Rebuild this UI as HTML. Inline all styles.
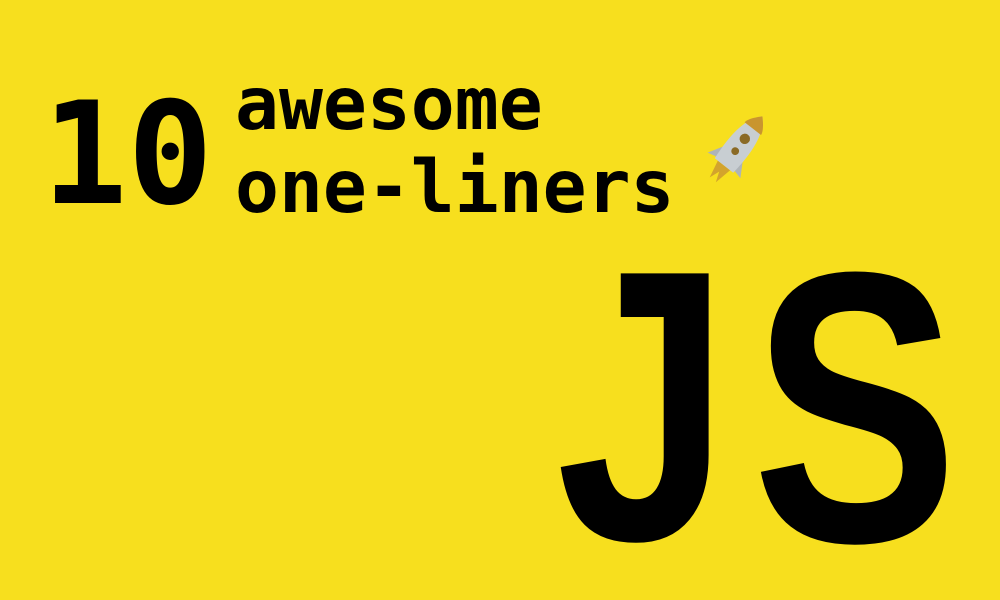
<!DOCTYPE html>
<html><head><meta charset="utf-8"><style>
html,body{margin:0;padding:0}
body{width:1000px;height:600px;background:#F7DF1E;position:relative;overflow:hidden}
svg{position:absolute;left:0;top:0}
</style></head><body>
<svg width="1000" height="600" viewBox="0 0 1000 600">
<rect width="1000" height="600" fill="#F7DF1E"/>
<text x="42" y="203" font-family="DejaVu Sans Mono, monospace" font-weight="bold" font-size="142" fill="#000">10</text>
<text x="235" y="129" font-family="DejaVu Sans Mono, monospace" font-weight="bold" font-size="73" fill="#000">awesome</text>
<text x="235" y="212" font-family="DejaVu Sans Mono, monospace" font-weight="bold" font-size="73" fill="#000">one-liners</text>
<text x="556" y="539" font-family="Liberation Sans, sans-serif" font-weight="bold" font-size="386" fill="#000" textLength="174" lengthAdjust="spacingAndGlyphs">J</text>
<text x="752" y="541" font-family="Liberation Sans, sans-serif" font-weight="bold" font-size="386" fill="#000" textLength="206" lengthAdjust="spacingAndGlyphs">S</text>
<g transform="translate(740,145) rotate(38) scale(1.3)">
<path d="M-6 20 L-3 34 L0 26 L3 34 L6 20 Z" fill="#c9952f" opacity="0.8"/>
<path d="M-9 8 L-16 20 L-8 18 Z" fill="#aeb4b8"/>
<path d="M9 8 L16 20 L8 18 Z" fill="#aeb4b8"/>
<path d="M0 -28 C10 -18 11 0 9 20 L-9 20 C-11 0 -10 -18 0 -28 Z" fill="#c8ced2"/>
<path d="M0 -28 C6 -22 8 -18 8 -16 L-8 -16 C-8 -18 -6 -22 0 -28 Z" fill="#c9952f"/>
<circle cx="0" cy="-6" r="4" fill="#8a6a25"/>
<circle cx="0" cy="6" r="3" fill="#8a6a25"/>
</g>
</svg>
</body></html>
